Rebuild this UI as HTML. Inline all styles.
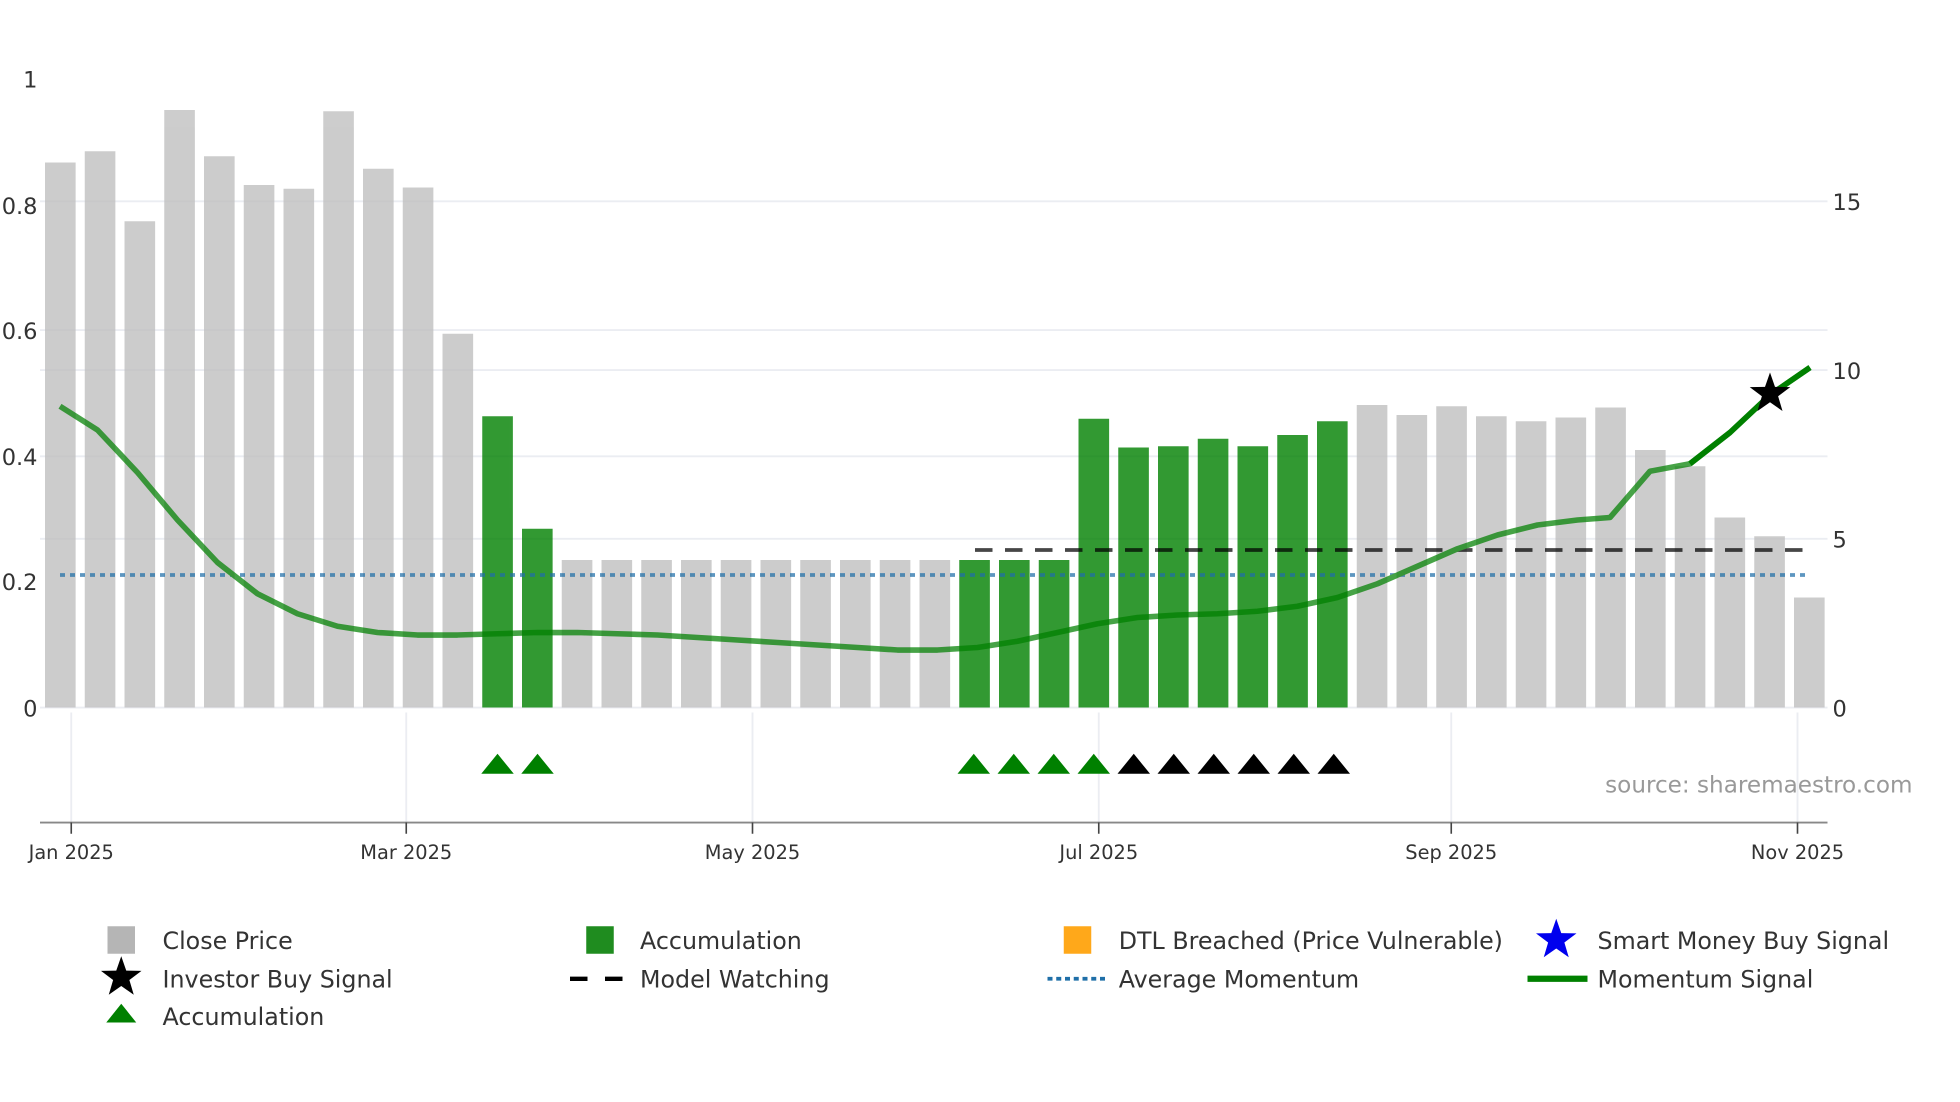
<!DOCTYPE html>
<html><head><meta charset="utf-8"><style>
html,body{margin:0;padding:0;background:#fff;}
svg{display:block;}
text{font-family:"DejaVu Sans","Liberation Sans",sans-serif;}
</style></head><body>
<svg width="1960" height="1102" viewBox="0 0 1568 881.6" xmlns="http://www.w3.org/2000/svg">
<rect width="1568" height="881.6" fill="#fff"/>
<g stroke="#ebedf2" stroke-width="1.5">
<line x1="32" y1="161" x2="1462" y2="161"/>
<line x1="32" y1="264" x2="1462" y2="264"/>
<line x1="32" y1="296" x2="1462" y2="296"/>
<line x1="32" y1="365" x2="1462" y2="365"/>
<line x1="32" y1="431" x2="1462" y2="431"/>
<line x1="32" y1="566" x2="1462" y2="566"/>
<line x1="57" y1="570" x2="57" y2="658"/>
<line x1="325" y1="570" x2="325" y2="658"/>
<line x1="602" y1="570" x2="602" y2="658"/>
<line x1="879" y1="570" x2="879" y2="658"/>
<line x1="1161" y1="570" x2="1161" y2="658"/>
<line x1="1438" y1="570" x2="1438" y2="658"/>
</g>
<g id="bars" opacity="0.8"></g>
<g opacity="0.72">
<line x1="48" y1="460" x2="1446" y2="460" stroke="#1f6fa8" stroke-width="3" stroke-dasharray="4,4"/>
<line x1="780" y1="440" x2="1446" y2="440" stroke="#000" stroke-width="3" stroke-dasharray="14,10"/>
<polyline fill="none" stroke="#008000" stroke-width="4.5" stroke-linejoin="round" points="48,325 78,344 110,378 142,416 174,450 206,475 238,491 270,501 302,506 334,508 366,508 398,507 430,506 462,506 494,507 526,508 558,510 590,512 622,514 654,516 686,518 718,520 750,520 782,518 814,513 846,506 878,499 910,494 942,492 974,491 1006,489 1038,485 1070,478 1102,467 1134,453 1166,439 1198,428 1230,420 1262,416 1288,414 1320,377 1352,371 1384,346 1416,316 1448,294"/>
</g>
<polyline fill="none" stroke="#008000" stroke-width="4.5" stroke-linejoin="round" points="1352,371 1384,346 1416,316 1448,294"/>
<polygon transform="translate(1416,315)" fill="#000" points="0,-17 4,-5.5 16.2,-5.3 6.5,2 10,13.8 0,6.8 -10,13.8 -6.5,2 -16.2,-5.3 -4,-5.5"/>
<g id="tri"></g>
<line x1="32" y1="658" x2="1462" y2="658" stroke="#888" stroke-width="1.5"/>
<g stroke="#444" stroke-width="1.3">
<line x1="57" y1="658" x2="57" y2="667"/><line x1="325" y1="658" x2="325" y2="667"/><line x1="602" y1="658" x2="602" y2="667"/><line x1="879" y1="658" x2="879" y2="667"/><line x1="1161" y1="658" x2="1161" y2="667"/><line x1="1438" y1="658" x2="1438" y2="667"/>
</g>
<g font-size="15.5" fill="#333" text-anchor="middle">
<text x="57" y="687">Jan 2025</text><text x="325" y="687">Mar 2025</text><text x="602" y="687">May 2025</text><text x="879" y="687">Jul 2025</text><text x="1161" y="687">Sep 2025</text><text x="1438" y="687">Nov 2025</text>
</g>
<g font-size="18" fill="#333" text-anchor="end">
<text x="30" y="70">1</text><text x="30" y="171">0.8</text><text x="30" y="271">0.6</text><text x="30" y="372">0.4</text><text x="30" y="472">0.2</text><text x="30" y="573">0</text>
</g>
<g font-size="18" fill="#333">
<text x="1466" y="168">15</text><text x="1466" y="303">10</text><text x="1466" y="438">5</text><text x="1466" y="573">0</text>
</g>
<text x="1530" y="634" font-size="18.5" fill="#999" text-anchor="end">source: sharemaestro.com</text>
<g font-size="19" fill="#333">
<rect x="86" y="741" width="22" height="22" fill="#b5b5b5"/><text x="130" y="759">Close Price</text>
<rect x="469" y="741" width="22" height="22" fill="#1f8c1f"/><text x="512" y="759">Accumulation</text>
<rect x="851" y="741" width="22" height="22" fill="#ffa81a"/><text x="895" y="759">DTL Breached (Price Vulnerable)</text>
<polygon transform="translate(1245,752)" fill="#0000ee" points="0,-17 4,-5.5 16.2,-5.3 6.5,2 10,13.8 0,6.8 -10,13.8 -6.5,2 -16.2,-5.3 -4,-5.5"/><text x="1278" y="759">Smart Money Buy Signal</text>
<polygon transform="translate(97,782)" fill="#000" points="0,-17 4,-5.5 16.2,-5.3 6.5,2 10,13.8 0,6.8 -10,13.8 -6.5,2 -16.2,-5.3 -4,-5.5"/><text x="130" y="790">Investor Buy Signal</text>
<line x1="456" y1="783" x2="500" y2="783" stroke="#000" stroke-width="3.5" stroke-dasharray="14,14"/><text x="512" y="790">Model Watching</text>
<line x1="838" y1="783" x2="884" y2="783" stroke="#1f6fa8" stroke-width="3" stroke-dasharray="4,3"/><text x="895" y="790">Average Momentum</text>
<line x1="1222" y1="783" x2="1270" y2="783" stroke="#008000" stroke-width="5"/><text x="1278" y="790">Momentum Signal</text>
<polygon points="85,818 97,803 109,818" fill="#008000"/><text x="130" y="820">Accumulation</text>
</g>
</svg>
<script>
var tops=[130,121,177,88,125,148,151,89,135,150,267,333,423,448,448,448,448,448,448,448,448,448,448,448,448,448,335,358,357,351,357,348,337,324,332,325,333,337,334,326,360,373,414,429,478];
var g=document.getElementById('bars'),s='';
for(var i=0;i<tops.length;i++){var x=36+31.8*i;var gr=(i==11||i==12||(i>=23&&i<=32));
s+='<rect x="'+x.toFixed(1)+'" y="'+tops[i]+'" width="24.5" height="'+(566-tops[i])+'" fill="'+(gr?'#008000':'#c0c0c0')+'"/>';}
g.innerHTML=s;
var tx=[[398,'#008000'],[430,'#008000'],[779,'#008000'],[811,'#008000'],[843,'#008000'],[875,'#008000'],[907,'#000'],[939,'#000'],[971,'#000'],[1003,'#000'],[1035,'#000'],[1067,'#000']],t='';
tx.forEach(function(a){t+='<polygon points="'+(a[0]-13)+',619 '+a[0]+',603 '+(a[0]+13)+',619" fill="'+a[1]+'"/>';});
document.getElementById('tri').innerHTML=t;
</script>
</body></html>
